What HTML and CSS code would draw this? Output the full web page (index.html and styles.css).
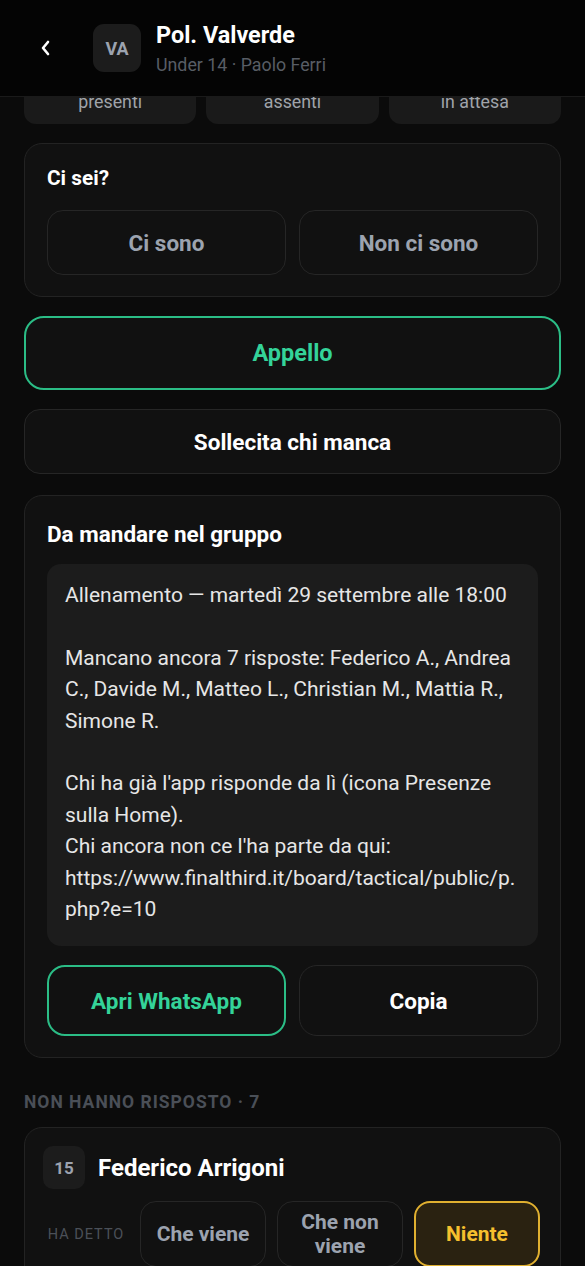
FILE: index.html
```html
<!DOCTYPE html>
<html lang="it">
<head>
    <meta charset="UTF-8">
    <meta name="viewport" content="width=device-width, initial-scale=1.0">
    <title>Presenze - Pol. Valverde</title>
    <link rel="stylesheet" href="styles.css">
</head>
<body>
    <header class="topbar">
        <div class="back" aria-label="Indietro">
            <svg width="10" height="16" viewBox="0 0 10 16"><polyline points="8,2 3,8 8,14" fill="none" stroke="#fff" stroke-width="2.6" stroke-linecap="round" stroke-linejoin="round"/></svg>
        </div>
        <div class="team-avatar">VA</div>
        <div class="team-info">
            <div class="team-name">Pol. Valverde</div>
            <div class="team-sub">Under 14 · Paolo Ferri</div>
        </div>
    </header>

    <main class="page">
        <!-- counters scrolled under the header, only the labels show -->
        <div class="stats">
            <div class="stat"><span class="stat-label">presenti</span></div>
            <div class="stat"><span class="stat-label">assenti</span></div>
            <div class="stat"><span class="stat-label">in attesa</span></div>
        </div>

        <section class="card">
            <h2 class="card-title small">Ci sei?</h2>
            <div class="btn-pair">
                <button class="btn muted">Ci sono</button>
                <button class="btn muted">Non ci sono</button>
            </div>
        </section>

        <button class="btn wide green tall">Appello</button>
        <button class="btn wide">Sollecita chi manca</button>

        <section class="card share">
            <h2 class="card-title">Da mandare nel gruppo</h2>
            <div class="message">Allenamento — martedì 29 settembre alle 18:00

Mancano ancora 7 risposte: Federico A., Andrea C., Davide M., Matteo L., Christian M., Mattia R., Simone R.

Chi ha già l'app risponde da lì (icona Presenze sulla Home).
Chi ancora non ce l'ha parte da qui: https://www.finalthird.it/board/tactical/public/p.<wbr>php?e=10</div>
            <div class="btn-pair">
                <button class="btn green big">Apri WhatsApp</button>
                <button class="btn big">Copia</button>
            </div>
        </section>

        <div class="section-label">NON HANNO RISPOSTO · 7</div>

        <section class="card player">
            <div class="player-head">
                <span class="shirt">15</span>
                <span class="player-name">Federico Arrigoni</span>
            </div>
            <div class="answer-row">
                <span class="answer-label">HA DETTO</span>
                <button class="btn answer muted">Che viene</button>
                <button class="btn answer muted">Che non viene</button>
                <button class="btn answer yellow">Niente</button>
            </div>
        </section>
    </main>
</body>
</html>
```

FILE: styles.css
```css
body {
    margin: 0;
    background-color: #0b0b0b;
    font-family: Roboto, "Liberation Sans", sans-serif;
    color: #fff;
}

.topbar {
    position: fixed;
    top: 0;
    left: 0;
    right: 0;
    height: 96px;
    display: flex;
    align-items: center;
    background: #040404;
    border-bottom: 1px solid #1a1a1a;
    z-index: 10;
}

.back {
    width: 93px;
    box-sizing: border-box;
    padding-left: 40px;
    display: flex;
    align-items: center;
    cursor: pointer;
}

.team-avatar {
    width: 48px;
    height: 48px;
    border-radius: 11px;
    background: #1c1c1c;
    color: #9ca3af;
    font-weight: 700;
    font-size: 18px;
    display: flex;
    align-items: center;
    justify-content: center;
    margin-right: 15px;
}

.team-name {
    font-size: 23.4px;
    font-weight: 700;
    line-height: 28px;
    margin-bottom: 5px;
}

.team-sub {
    font-size: 17.8px;
    line-height: 22px;
    color: #585d65;
}

.page {
    padding: 44px 24px 0;
}

.stats {
    display: grid;
    grid-template-columns: repeat(3, 1fr);
    gap: 10px;
}

.stat {
    background: #1a1a1a;
    border-radius: 12px;
    padding: 48px 0 12px;
    display: flex;
    justify-content: center;
}

.stat-label {
    font-size: 17.8px;
    line-height: 20px;
    color: #a0a4aa;
}

.card {
    background: #111111;
    border: 1px solid #232323;
    border-radius: 18px;
    padding: 22px 22px 21px;
    margin-top: 19px;
}

.card.share {
    margin-top: 21px;
}

.card-title {
    margin: 0 0 14px;
    font-size: 22.5px;
    line-height: 32px;
    font-weight: 700;
}

.card-title.small {
    font-size: 20.8px;
    line-height: 24px;
    margin-bottom: 20px;
}

.btn-pair {
    display: grid;
    grid-template-columns: 1fr 1fr;
    gap: 13px;
}

.btn {
    font-family: inherit;
    font-size: 22.5px;
    font-weight: 700;
    color: #fff;
    background: #111111;
    border: 1px solid #262626;
    border-radius: 16px;
    height: 65px;
    cursor: pointer;
}

.btn.muted {
    color: #9ca3af;
}

.btn.green {
    color: #34d399;
    border: 2px solid #2bbd86;
}

.btn.wide {
    display: block;
    width: 100%;
    margin-top: 19px;
}

.btn.tall {
    height: 74px;
    border-radius: 20px;
    font-size: 23.5px;
}

.btn.big {
    height: 71px;
    border-radius: 18px;
}

.message {
    background: #1c1c1c;
    border-radius: 14px;
    padding: 16px 14px 21px 18px;
    margin-bottom: 19px;
    font-size: 21px;
    line-height: 31.4px;
    color: #e6e6e6;
    white-space: pre-wrap;
    overflow-wrap: anywhere;
}

.section-label {
    margin: 34px 0 0;
    font-size: 17.5px;
    font-weight: 700;
    letter-spacing: 1px;
    color: #4a4f57;
    line-height: 20px;
}

.card.player {
    margin-top: 15px;
    padding: 18px 20px 20px 18px;
}

.player-head {
    display: flex;
    align-items: center;
    gap: 13px;
    margin-bottom: 12px;
}

.shirt {
    width: 42px;
    height: 43px;
    border-radius: 10px;
    background: #1c1c1c;
    color: #9ca3af;
    font-size: 17px;
    font-weight: 700;
    display: flex;
    align-items: center;
    justify-content: center;
}

.player-name {
    font-size: 24px;
    font-weight: 700;
}

.answer-row {
    display: grid;
    grid-template-columns: 86px 1fr 1fr 1fr;
    gap: 11px;
    align-items: center;
}

.answer-label {
    font-size: 14.5px;
    letter-spacing: 1px;
    color: #4b5058;
    text-align: center;
}

.btn.answer {
    height: 66px;
    font-size: 21px;
    line-height: 24px;
    padding: 0 10px;
}

.btn.yellow {
    color: #f5c02e;
    background: #2a2211;
    border: 2px solid #e0b030;
}
```
